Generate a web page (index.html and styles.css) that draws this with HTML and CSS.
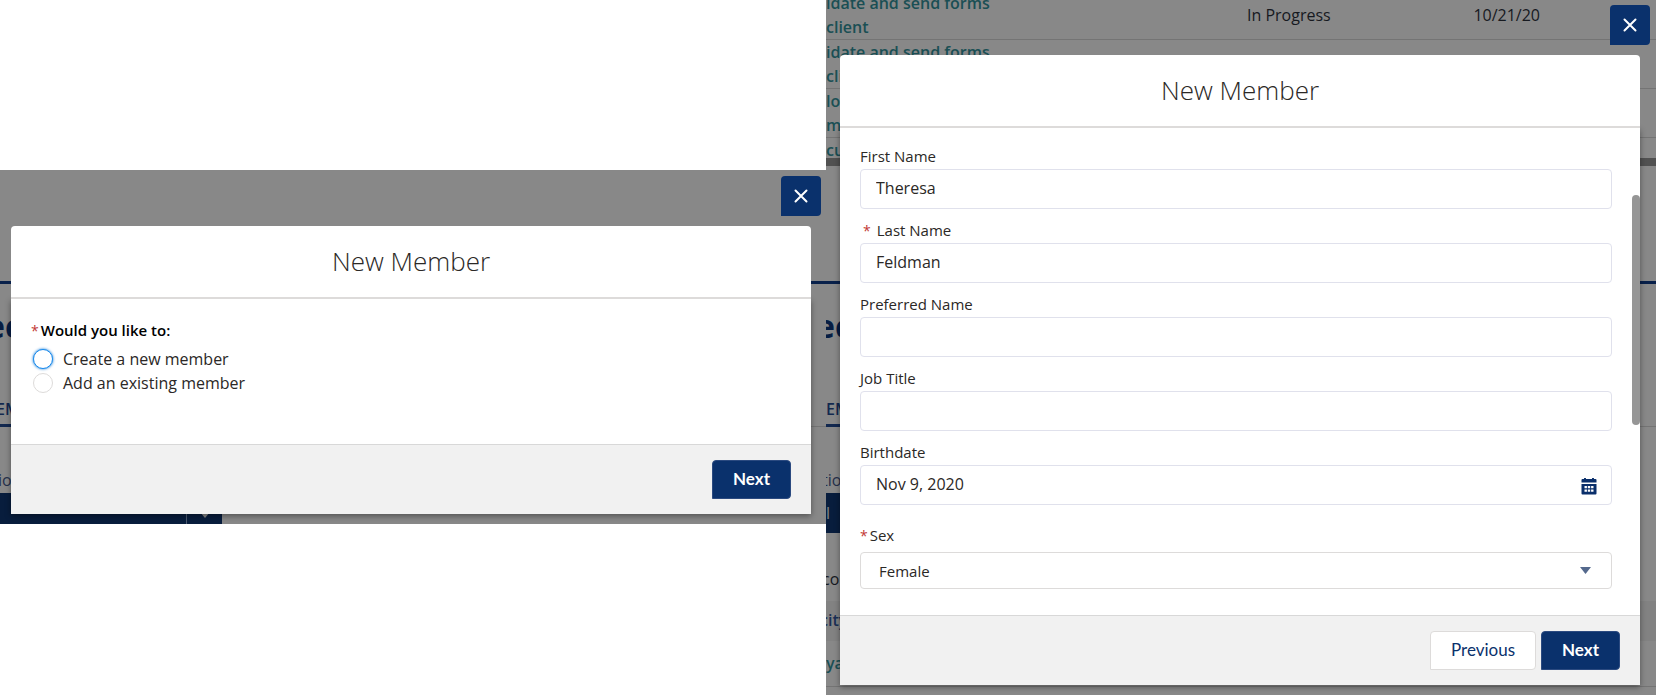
FILE: index.html
```html
<!DOCTYPE html>
<html lang="en">
<head>
    <meta charset="UTF-8">
    <meta name="viewport" content="width=device-width, initial-scale=1.0">
    <title>New Member</title>
    <link rel="stylesheet" href="styles.css">
</head>
<body>
    <main class="screens">
        <!-- Step 1: choose how to add the member -->
        <section class="screen screen-choice">
            <div class="backdrop" aria-hidden="true">
                <div class="record">
                    <div class="record-title">ec</div>
                    <div class="record-tabs"><span class="tab">EM</span></div>
                    <div class="record-label">io</div>
                    <div class="record-bar">
                        <span class="record-bar-menu">
                            <svg width="10" height="6" viewBox="0 0 10 6"><path d="M0 0h10L5 6z" fill="#888"/></svg>
                        </span>
                    </div>
                </div>
            </div>

            <button type="button" class="close-button" aria-label="Close">
                <svg width="14" height="14" viewBox="0 0 14 14"><path d="M1.5 1.5l11 11M12.5 1.5l-11 11" stroke="#fff" stroke-width="2" stroke-linecap="round"/></svg>
            </button>

            <div class="modal" role="dialog" aria-labelledby="choiceTitle">
                <header class="modal-header">
                    <h1 id="choiceTitle">New Member</h1>
                </header>
                <form class="modal-form">
                    <div class="modal-body">
                        <fieldset class="choices">
                            <legend><span class="required">*</span>Would you like to:</legend>
                            <div class="choice">
                                <input type="radio" id="createMember" name="choice" class="focused">
                                <label for="createMember">Create a new member</label>
                            </div>
                            <div class="choice">
                                <input type="radio" id="existingMember" name="choice">
                                <label for="existingMember">Add an existing member</label>
                            </div>
                        </fieldset>
                    </div>
                    <footer class="modal-footer">
                        <button type="button" class="button button-brand">Next</button>
                    </footer>
                </form>
            </div>
        </section>

        <!-- Step 2: member details -->
        <section class="screen screen-details">
            <div class="backdrop" aria-hidden="true">
                <div class="task-list">
                    <table class="tasks">
                        <tr>
                            <td class="task-name">idate and send forms<br>client</td>
                            <td class="task-status">In Progress</td>
                            <td class="task-date">10/21/20</td>
                        </tr>
                        <tr>
                            <td class="task-name">idate and send forms<br>client</td>
                            <td></td>
                            <td></td>
                        </tr>
                        <tr>
                            <td class="task-name">lo<br>m</td>
                            <td></td>
                            <td></td>
                        </tr>
                        <tr>
                            <td class="task-name">cu</td>
                            <td></td>
                            <td></td>
                        </tr>
                    </table>
                </div>
                <div class="record">
                    <div class="record-title">ec</div>
                    <div class="record-tabs"><span class="tab">EM</span></div>
                    <div class="record-label">tio</div>
                    <div class="record-bar">l</div>
                    <div class="record-note">co</div>
                    <div class="record-head">city</div>
                    <div class="record-row">ya</div>
                </div>
            </div>

            <button type="button" class="close-button" aria-label="Close">
                <svg width="14" height="14" viewBox="0 0 14 14"><path d="M1.5 1.5l11 11M12.5 1.5l-11 11" stroke="#fff" stroke-width="2" stroke-linecap="round"/></svg>
            </button>

            <div class="modal" role="dialog" aria-labelledby="detailsTitle">
                <header class="modal-header">
                    <h1 id="detailsTitle">New Member</h1>
                </header>
                <form class="modal-form">
                    <div class="modal-body details-body">
                        <div class="field">
                            <label for="firstName">First Name</label>
                            <input type="text" id="firstName" value="Theresa">
                        </div>
                        <div class="field">
                            <label for="lastName" class="label-indent"><span class="required">*</span>Last Name</label>
                            <input type="text" id="lastName" value="Feldman" required>
                        </div>
                        <div class="field">
                            <label for="preferredName">Preferred Name</label>
                            <input type="text" id="preferredName">
                        </div>
                        <div class="field">
                            <label for="jobTitle">Job Title</label>
                            <input type="text" id="jobTitle">
                        </div>
                        <div class="field">
                            <label for="birthdate">Birthdate</label>
                            <div class="control">
                                <input type="text" id="birthdate" value="Nov 9, 2020">
                                <svg class="icon-calendar" width="16" height="17" viewBox="0 0 16 17">
                                    <path fill="#0a2f6b" d="M1.5 1H3V.7a.9.9 0 0 1 2 0V1h6V.7a.9.9 0 0 1 2 0V1h1.500a1 1 0 0 1 1 1v2.500H.5V2a1 1 0 0 1 1-1z"/>
                                    <path fill="#0a2f6b" fill-rule="evenodd" d="M.5 6h15v9.500a1 1 0 0 1-1 1h-13a1 1 0 0 1-1-1zM3.500 8v2.200h2.400V8zm3.300 0v2.200h2.400V8zm3.300 0v2.200h2.400V8zM3.500 11.500v2.200h2.400v-2.200zm3.300 0v2.200h2.400v-2.200zm3.300 0v2.200h2.400v-2.200z"/>
                                </svg>
                            </div>
                        </div>
                        <div class="field field-select">
                            <label for="sex"><span class="required">*</span>Sex</label>
                            <div class="control">
                                <select id="sex">
                                    <option>Female</option>
                                    <option>Male</option>
                                </select>
                                <svg class="icon-arrow" width="11" height="7" viewBox="0 0 11 7"><path fill="#54698d" d="M0 0h11L5.500 7z"/></svg>
                            </div>
                        </div>
                        <div class="scroll-thumb"></div>
                    </div>
                    <footer class="modal-footer">
                        <button type="button" class="button button-neutral">Previous</button>
                        <button type="button" class="button button-brand">Next</button>
                    </footer>
                </form>
            </div>
        </section>
    </main>
</body>
</html>
```

FILE: styles.css
```css
* {
    box-sizing: border-box;
}

body {
    margin: 0;
    background-color: #fff;
    color: #2b2826;
    font-family: "Open Sans", "Noto Sans", sans-serif;
    font-size: 16px;
    line-height: 24px;
}

.screens {
    display: grid;
    grid-template-columns: 413fr 415fr;
    align-items: start;
    min-height: 100vh;
}

.screen {
    position: relative;
    display: flex;
    flex-direction: column;
    background-color: #888;
}

.screen-choice {
    margin-top: 170px;
    padding: 6px 15px 10px 11px;
}

.screen-details {
    min-height: 100vh;
    padding: 5px 16px 10px 14px;
}

/* Page behind the dialogs */
.backdrop {
    position: absolute;
    inset: 0;
    overflow: hidden;
}

.task-list {
    height: 166px;
    margin-bottom: 115px;
    border-bottom: 8px solid #515151;
    overflow: hidden;
}

.tasks {
    width: 100%;
    margin-top: -9px;
    border-collapse: separate;
    border-spacing: 0;
    table-layout: fixed;
    color: #16191f;
}

.tasks td {
    height: 49px;
    padding: 0;
    border-bottom: 1px solid #747474;
    vertical-align: middle;
}

.tasks .task-name {
    width: 50%;
    color: #1a4f54;
    font-weight: 600;
}

.tasks .task-status {
    width: 28%;
    padding-left: 6px;
}

.tasks tr:last-child .task-name {
    vertical-align: top;
}

.record {
    border-top: 3px solid #08204a;
}

.screen-choice .record {
    margin-top: 111px;
}

.record-title {
    height: 110px;
    padding-top: 24px;
    margin-left: -10px;
    color: #061d43;
    font-size: 32px;
    font-weight: 700;
    line-height: 36px;
}

.record-tabs {
    display: flex;
    height: 33px;
    border-bottom: 1px solid #747474;
}

.tab {
    height: 33px;
    padding-right: 4px;
    border-bottom: 3px solid #12284f;
    color: #12284f;
    font-weight: 600;
    line-height: 30px;
}

.screen-choice .record-title {
    margin-left: -14px;
}

.screen-choice .tab {
    margin-left: -4px;
}

.record-label {
    height: 66px;
    padding-top: 41px;
    margin-left: -4px;
    color: #26304b;
}

.screen-choice .record-label {
    margin-left: -2px;
}

.record-bar {
    display: flex;
    width: 222px;
    height: 40px;
    background-color: #081d3d;
    color: #888;
    line-height: 40px;
}

.screen-choice .record-bar {
    justify-content: flex-end;
}

.record-bar-menu {
    display: flex;
    align-items: center;
    justify-content: center;
    width: 36px;
    padding-top: 3px;
    border-left: 1px solid #4c5a70;
}

.record-note {
    height: 68px;
    padding-top: 34px;
    margin-left: -4px;
    color: #16191f;
}

.record-head {
    height: 40px;
    background-color: #828282;
    color: #1a2f55;
    font-weight: 600;
    line-height: 38px;
    text-indent: -6px;
}

.record-row {
    height: 46px;
    border-bottom: 1px solid #747474;
    color: #1a4f54;
    font-weight: 600;
    line-height: 44px;
}

/* Dialogs */
.close-button {
    position: relative;
    display: flex;
    align-items: center;
    justify-content: center;
    align-self: flex-end;
    width: 40px;
    height: 40px;
    margin: 0 -10px 10px 0;
    padding: 0;
    border: none;
    border-radius: 4px 4px 4px 0;
    background-color: #0a316c;
    cursor: pointer;
}

.modal {
    position: relative;
    display: flex;
    flex: 1;
    flex-direction: column;
}

.modal-header {
    position: relative;
    z-index: 1;
    padding: 16px;
    border-bottom: 2px solid #dddbda;
    border-radius: 4px 4px 0 0;
    background-color: #fff;
    text-align: center;
}

.modal-header h1 {
    margin: 0;
    font-size: 26px;
    font-weight: 300;
    line-height: 39px;
}

.modal-form {
    display: flex;
    flex: 1;
    flex-direction: column;
    box-shadow: 0 2px 6px rgba(0, 0, 0, 0.4);
}

.modal-body {
    position: relative;
    flex: 1;
    padding: 19px 20px 49px;
    background-color: #fff;
}

.modal-footer {
    display: flex;
    justify-content: flex-end;
    gap: 5px;
    padding: 15px 20px;
    border-top: 1px solid #d8d8d8;
    background-color: #f1f1f1;
}

.button {
    height: 39px;
    padding: 0 20px 2px;
    border: 1px solid #dddbda;
    border-radius: 4px 4px 4px 0;
    font-family: Lato, sans-serif;
    font-size: 17px;
    cursor: pointer;
}

.button-brand {
    border-color: #2b4a80;
    background-color: #0a316c;
    color: #fff;
    font-weight: 700;
}

.button-neutral {
    background-color: #fff;
    color: #0a316c;
}

.required {
    color: #c23934;
    font-size: 14px;
    font-weight: 400;
    line-height: 1;
}

/* Choice list */
.choices {
    margin: 0;
    padding: 0;
    border: none;
}

.choices legend {
    margin-bottom: 5px;
    padding: 0;
    color: #000;
    font-size: 15px;
    font-weight: 600;
}

.choices .required {
    margin-right: 2px;
}

.choice {
    display: flex;
    align-items: center;
    gap: 10px;
    height: 24px;
    padding-left: 2px;
}

.choice input {
    width: 20px;
    height: 20px;
    margin: 0;
    border: 1px solid #dddbda;
    border-radius: 50%;
    background-color: #fff;
    appearance: none;
}

.choice input:checked {
    border: 6px solid #1589ee;
}

.choice input.focused {
    border-color: #1589ee;
    box-shadow: 0 0 3px #0070d2;
}

/* Details form */
.details-body {
    padding: 18px 28px 26px 20px;
}

.field {
    display: flex;
    flex-direction: column;
    gap: 3px;
    margin-bottom: 11px;
}

.field label {
    font-size: 15px;
    line-height: 20px;
}

.field .label-indent {
    padding-left: 3px;
}

.label-indent .required {
    margin-right: 6px;
}

.field input,
.field select {
    width: 100%;
    height: 40px;
    padding: 0 15px 2px;
    border: 1px solid #e0e1ec;
    border-radius: 4px;
    background-color: #fff;
    color: #2b2826;
    font-family: inherit;
    font-size: 16px;
}

.field input:focus,
.field select:focus {
    outline: none;
    border-color: #1589ee;
}

.control {
    position: relative;
    display: flex;
}

.icon-calendar {
    position: absolute;
    top: 13px;
    right: 15px;
}

.icon-arrow {
    position: absolute;
    top: 15px;
    right: 21px;
}

.field-select {
    gap: 7px;
    margin: 20px 0 0;
}

.field-select .required {
    margin-right: 2px;
}

.field select {
    height: 37px;
    padding: 0 18px;
    border-color: #dddbda;
    font-size: 15px;
    appearance: none;
}

.scroll-thumb {
    position: absolute;
    top: 67px;
    right: 0;
    width: 8px;
    height: 230px;
    border-radius: 4px;
    background-color: #969696;
}
```
